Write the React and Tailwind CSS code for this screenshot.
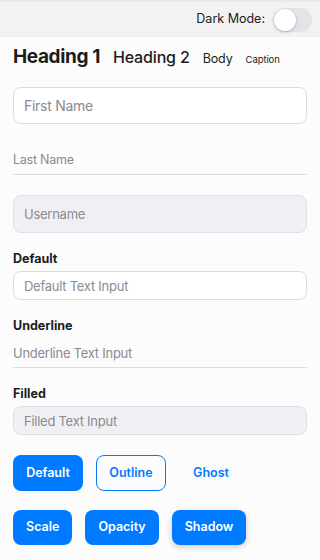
import { useState } from "react";

function Label({ children }) {
  return <div className="text-[12.5px] leading-4 font-bold text-[#1c1c1e]">{children}</div>;
}

export default function App() {
  const [dark, setDark] = useState(false);
  const [form, setForm] = useState({ first: "", last: "", user: "", def: "", under: "", filled: "" });
  const set = (k) => (e) => setForm((f) => ({ ...f, [k]: e.target.value }));

  return (
    <div className="min-h-[560px] bg-[#fcfcfc] text-[#1c1c1e] font-['Inter',sans-serif]">
      <div className="h-[37px] bg-[#f2f2f2] border-t-2 border-[#e8e8e8] flex items-center justify-end gap-[8px] pr-[8px]">
        <span className="text-[12.5px] text-[#1c1c1e]">Dark Mode:</span>
        <button
          onClick={() => setDark((d) => !d)}
          className={`w-[39px] h-[24px] rounded-full p-[1px] flex items-center ${dark ? "bg-[#34c759] justify-end" : "bg-[#e3e3e8] justify-start"}`}
        >
          <span className="w-[22px] h-[22px] rounded-full bg-white shadow-[0_1px_3px_rgba(0,0,0,0.25)]" />
        </button>
      </div>

      <div className="px-[13px]">
        <div className="flex items-baseline gap-[13px] pt-[6px] h-[40px]">
          <span className="text-[19px] font-bold tracking-[-0.02em]">Heading 1</span>
          <span className="text-[16px] font-medium tracking-[-0.01em]">Heading 2</span>
          <span className="text-[12.5px] tracking-[-0.01em]">Body</span>
          <span className="text-[9.5px] tracking-[-0.01em]">Caption</span>
        </div>

        <input
          value={form.first}
          onChange={set("first")}
          placeholder="First Name"
          className="mt-[10px] w-full h-[37px] rounded-lg border border-[#dcdce0] bg-white px-[10px] text-[14px] tracking-[-0.02em] placeholder:text-[#8a8a8f] outline-none"
        />
        <input
          value={form.last}
          onChange={set("last")}
          placeholder="Last Name"
          className="mt-[20px] w-full h-[31px] border-b border-[#dcdce0] bg-transparent text-[12.5px] tracking-[-0.02em] placeholder:text-[#8a8a8f] outline-none"
        />
        <input
          value={form.user}
          onChange={set("user")}
          placeholder="Username"
          className="mt-[20px] w-full h-[38px] rounded-lg border border-[#e0e0e4] bg-[#f0f0f4] px-[10px] text-[13px] tracking-[-0.02em] placeholder:text-[#8a8a8f] outline-none"
        />

        <div className="mt-[18px] flex flex-col gap-[4px]">
          <Label>Default</Label>
          <input
            value={form.def}
            onChange={set("def")}
            placeholder="Default Text Input"
            className="w-full h-[29px] rounded-lg border border-[#dcdce0] bg-white px-[10px] text-[13px] tracking-[-0.02em] placeholder:text-[#8a8a8f] outline-none"
          />
        </div>

        <div className="mt-[18px] flex flex-col gap-[4px]">
          <Label>Underline</Label>
          <input
            value={form.under}
            onChange={set("under")}
            placeholder="Underline Text Input"
            className="w-full h-[30px] border-b border-[#dcdce0] bg-transparent text-[13px] tracking-[-0.02em] placeholder:text-[#8a8a8f] outline-none"
          />
        </div>

        <div className="mt-[18px] flex flex-col gap-[4px]">
          <Label>Filled</Label>
          <input
            value={form.filled}
            onChange={set("filled")}
            placeholder="Filled Text Input"
            className="w-full h-[29px] rounded-lg border border-[#e0e0e4] bg-[#f0f0f4] px-[10px] text-[13px] tracking-[-0.02em] placeholder:text-[#8a8a8f] outline-none"
          />
        </div>

        <div className="mt-[20px] flex gap-[13px]">
          <button className="w-[70px] h-[36px] rounded-lg bg-[#007aff] text-white text-[12.5px] font-semibold">Default</button>
          <button className="w-[70px] h-[36px] rounded-lg border border-[#007aff] text-[#007aff] text-[12.5px] font-semibold">Outline</button>
          <button className="w-[64px] h-[36px] rounded-lg text-[#007aff] text-[12.5px] font-semibold">Ghost</button>
        </div>

        <div className="mt-[19px] flex gap-[13px]">
          <button className="h-[35px] px-[13px] rounded-lg bg-[#007aff] text-white text-[12.5px] font-semibold">Scale</button>
          <button className="h-[35px] px-[13px] rounded-lg bg-[#007aff] text-white text-[12.5px] font-semibold">Opacity</button>
          <button className="h-[35px] px-[13px] rounded-lg bg-[#007aff] text-white text-[12.5px] font-semibold shadow-[0_2px_6px_rgba(0,0,0,0.2)]">Shadow</button>
        </div>
      </div>
    </div>
  );
}
